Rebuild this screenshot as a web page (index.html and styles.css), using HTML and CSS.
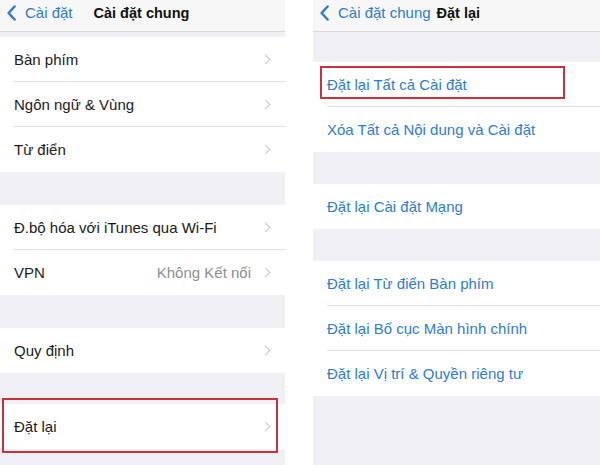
FILE: index.html
```html
<!DOCTYPE html>
<html lang="vi">
<head>
<meta charset="utf-8">
<link rel="stylesheet" href="styles.css">
</head>
<body>
<div class="screens">
  <section class="phone left">
    <header class="nav">
      <span class="back">
        <svg class="back-ico" width="9" height="16" viewBox="0 0 9 16"><polyline points="7.6,1.5 1.6,8 7.6,14.5" fill="none" stroke="#2d7ccf" stroke-width="2.5" stroke-linecap="round" stroke-linejoin="round"/></svg>
        <span class="back-label">Cài đặt</span>
      </span>
      <span class="title title-left">Cài đặt chung</span>
    </header>
    <div class="group g-top">
      <div class="row"><div class="cell"><span class="label">Bàn phím</span><span class="chev"></span></div></div>
      <div class="row"><div class="cell"><span class="label">Ngôn ngữ &amp; Vùng</span><span class="chev"></span></div></div>
      <div class="row"><div class="cell"><span class="label">Từ điển</span><span class="chev"></span></div></div>
    </div>
    <div class="group g-33">
      <div class="row"><div class="cell"><span class="label">Đ.bộ hóa với iTunes qua Wi-Fi</span><span class="chev"></span></div></div>
      <div class="row"><div class="cell"><span class="label">VPN</span><span class="detail">Không Kết nối</span><span class="chev"></span></div></div>
    </div>
    <div class="group g-33">
      <div class="row"><div class="cell"><span class="label">Quy định</span><span class="chev"></span></div></div>
    </div>
    <div class="group g-31">
      <div class="row marked"><div class="cell"><span class="label">Đặt lại</span><span class="chev"></span></div><span class="mark mark-left"></span></div>
    </div>
  </section>
  <div class="gutter"></div>
  <section class="phone right">
    <header class="nav nav-right">
      <span class="back">
        <svg class="back-ico" width="9" height="16" viewBox="0 0 9 16"><polyline points="7.6,1.5 1.6,8 7.6,14.5" fill="none" stroke="#2d7ccf" stroke-width="2.5" stroke-linecap="round" stroke-linejoin="round"/></svg>
        <span class="back-label">Cài đặt chung</span>
      </span>
      <span class="title title-right">Đặt lại</span>
    </header>
    <div class="group g-30 blue">
      <div class="row marked"><div class="cell"><span class="label">Đặt lại Tất cả Cài đặt</span></div><span class="mark mark-right"></span></div>
      <div class="row"><div class="cell"><span class="label">Xóa Tất cả Nội dung và Cài đặt</span></div></div>
    </div>
    <div class="group g-32 blue">
      <div class="row"><div class="cell"><span class="label">Đặt lại Cài đặt Mạng</span></div></div>
    </div>
    <div class="group g-32 blue">
      <div class="row"><div class="cell"><span class="label">Đặt lại Từ điển Bàn phím</span></div></div>
      <div class="row"><div class="cell"><span class="label">Đặt lại Bố cục Màn hình chính</span></div></div>
      <div class="row"><div class="cell"><span class="label">Đặt lại Vị trí &amp; Quyền riêng tư</span></div></div>
    </div>
  </section>
</div>
</body>
</html>
```

FILE: styles.css
```css
* { box-sizing: border-box; }
html, body { margin: 0; padding: 0; background: #fff; }
body {
  font-family: "Liberation Sans", Arial, sans-serif;
  font-size: 15px;
  color: #1a1a1a;
  width: 600px;
  height: 465px;
  overflow: hidden;
}
.screens { display: flex; height: 465px; }
.phone {
  background: #efeff4;
  height: 465px;
  display: flex;
  flex-direction: column;
}
.left { width: 285px; }
.gutter { width: 28px; background: #fff; }
.right { flex: 1; }

.nav {
  height: 32px;
  flex: 0 0 32px;
  background: #f7f7f8;
  border-bottom: 1px solid #d9d9dc;
  display: flex;
  align-items: center;
  padding: 0 0 6px 7px;
}
.nav-right { padding-left: 7px; }
.back { display: flex; align-items: center; color: #2d7ccf; }
.back-ico { display: block; margin-right: 9px; }
.title { font-weight: bold; color: #111; font-size: 14.5px; }
.title-left { margin-left: 21px; }
.title-right { margin-left: 6px; }

.group { background: #fff; }
.g-top { margin-top: 5px; }
.g-33 { margin-top: 33px; }
.g-31 { margin-top: 31px; }
.g-30 { margin-top: 30px; }
.g-32 { margin-top: 32px; }

.row {
  position: relative;
  padding-left: 14px;
  display: flex;
}
.cell {
  flex: 1;
  height: 45px;
  display: flex;
  align-items: center;
  border-bottom: 1px solid #dedee1;
  padding-right: 15px;
}
.row:last-child .cell { border-bottom: none; }
.label { flex: 1; white-space: nowrap; }
.blue .label { color: #2d7ccf; }
.detail { color: #8e8e93; margin-right: 11px; }
.chev {
  width: 7px;
  height: 7px;
  border-top: 1.5px solid #c7c7cc;
  border-right: 1.5px solid #c7c7cc;
  transform: rotate(45deg);
  margin-right: 1px;
}

.mark {
  position: absolute;
  border: 2.5px solid #c8323c;
  pointer-events: none;
}
.mark-left { left: 2px; right: 7px; top: -6px; bottom: -4px; }
.mark-right { left: 7px; width: 245px; top: 4px; bottom: 8px; }
```
